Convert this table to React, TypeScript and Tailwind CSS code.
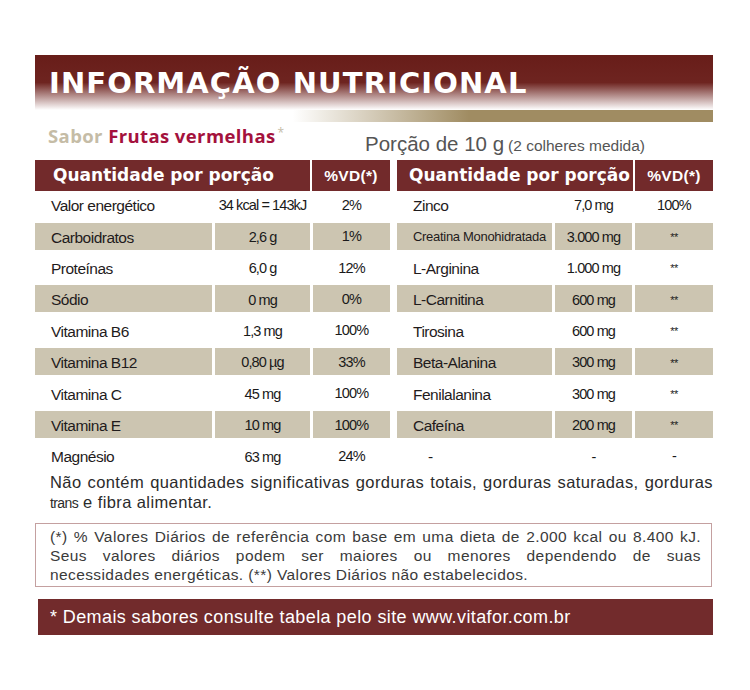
import React from 'react';

const leftRows = [
  ['Valor energético', '34 kcal = 143kJ', '2%'],
  ['Carboidratos', '2,6 g', '1%'],
  ['Proteínas', '6,0 g', '12%'],
  ['Sódio', '0 mg', '0%'],
  ['Vitamina B6', '1,3 mg', '100%'],
  ['Vitamina B12', '0,80 µg', '33%'],
  ['Vitamina C', '45 mg', '100%'],
  ['Vitamina E', '10 mg', '100%'],
  ['Magnésio', '63 mg', '24%'],
];

const rightRows = [
  ['Zinco', '7,0 mg', '100%'],
  ['Creatina Monohidratada', '3.000 mg', '**'],
  ['L-Arginina', '1.000 mg', '**'],
  ['L-Carnitina', '600 mg', '**'],
  ['Tirosina', '600 mg', '**'],
  ['Beta-Alanina', '300 mg', '**'],
  ['Fenilalanina', '300 mg', '**'],
  ['Cafeína', '200 mg', '**'],
  ['-', '-', '-'],
];

const narrow = "font-['Liberation_Sans',Arial,sans-serif]";

function NutrientTable({ rows, side }: { rows: string[][]; side: 'left' | 'right' }) {
  const cols = side === 'left' ? 'grid-cols-[177px_95px_77px]' : 'grid-cols-[155px_77px_78px]';
  return (
    <div className="flex flex-col">
      <div className={`flex h-[31px] gap-[2px] text-white ${side === 'left' ? 'w-[355px]' : 'w-[316px]'}`}>
        <div
          className={`flex flex-1 items-center bg-[#722a2b] font-['DejaVu_Sans',sans-serif] text-[17px] font-bold whitespace-nowrap ${
            side === 'left' ? 'pl-[18px]' : 'pl-[12px]'
          }`}
        >
          Quantidade por porção
        </div>
        <div
          className={`flex w-[78px] items-center justify-center bg-[#722a2b] ${narrow} text-[15.5px] font-bold tracking-[0.3px]`}
        >
          %VD(*)
        </div>
      </div>
      <div className={`grid ${cols} gap-x-[3px] gap-y-[4.4px] pt-[0.3px]`}>
        {rows.map((row, i) => {
          const shaded = i % 2 === 1;
          const bg = shaded ? 'bg-[#ccc5b1]' : '';
          const small = row[0] === 'Creatina Monohidratada';
          const dash = row[0] === '-';
          return (
            <React.Fragment key={i}>
              <div
                className={`flex h-[27px] items-center pt-[2px] ${bg} ${narrow} text-[#1f1b1c] whitespace-nowrap ${
                  small ? 'text-[13px] tracking-[-0.3px]' : 'text-[15.5px] tracking-[-0.5px]'
                } ${dash ? 'pl-[31px]' : 'pl-[16px]'}`}
              >
                {row[0]}
              </div>
              <div
                className={`flex h-[27px] items-center justify-center pt-[3px] ${bg} ${narrow} text-[14.5px] tracking-[-0.9px] text-[#1a1a1a] whitespace-nowrap`}
              >
                {row[1]}
              </div>
              <div
                className={`flex h-[27px] items-center justify-center pt-[2px] ${bg} ${narrow} ${
                  row[2] === '**' ? 'text-[11px] tracking-[-0.5px]' : 'text-[14.5px] tracking-[-0.8px]'
                } text-[#1a1a1a] whitespace-nowrap`}
              >
                {row[2]}
              </div>
            </React.Fragment>
          );
        })}
      </div>
    </div>
  );
}

export default function App() {
  return (
    <div className="min-h-[690px] w-[750px] bg-white pt-[55px]">
      <div className="ml-[35px] w-[678px]">
        {/* cabeçalho */}
        <div className="h-[55px] bg-[linear-gradient(to_bottom,#681d19_0%,#6e2420_50%,#ffffff_100%)] pl-[14px] pt-[12px]">
          <h1 className="font-['DejaVu_Sans',sans-serif] text-[29px] leading-[32px] font-bold tracking-[1.1px] text-white whitespace-nowrap">
            INFORMAÇÃO NUTRICIONAL
          </h1>
        </div>
        <div className="h-[12px] bg-[linear-gradient(to_right,rgba(160,140,98,0)_38%,#a08c62_64%,#a08c62_100%)]" />

        {/* sabor + porção */}
        <div className="flex h-[38px]">
          <div className="w-[330px] pl-[13px] pt-[4px] font-['Open_Sans',sans-serif] text-[18.5px] leading-[20px] font-bold tracking-[0.4px] whitespace-nowrap">
            <span className="text-[#c5bca6]">Sabor </span>
            <span className="text-[#a4123d]">Frutas vermelhas</span>
            <span className="relative -top-[6px] ml-[2px] text-[12px] font-normal text-[#c5bca6]">*</span>
          </div>
          <div className={`pt-[11px] ${narrow} leading-[22px] text-[#555555] whitespace-nowrap`}>
            <span className="text-[20.5px]">Porção de 10 g</span>
            <span className="ml-[4px] text-[15.5px]">(2 colheres medida)</span>
          </div>
        </div>

        {/* tabelas */}
        <div className="flex gap-[7px]">
          <NutrientTable rows={leftRows} side="left" />
          <NutrientTable rows={rightRows} side="right" />
        </div>

        {/* observação */}
        <div className={`mt-[3px] pl-[15px] ${narrow} text-[16.5px] leading-[20px] tracking-[0.4px] text-[#2b2b2b]`}>
          <div className="[text-align-last:justify] text-justify">
            Não contém quantidades significativas gorduras totais, gorduras saturadas, gorduras
          </div>
          <div>
            <span className="text-[14px] tracking-[-0.6px]">trans</span> e fibra alimentar.
          </div>
        </div>

        <div
          className={`mt-[10px] w-[677px] border border-[#c4a0a0] pt-[3px] pr-[10px] pb-[2px] pl-[14px] ${narrow} text-[15.5px] leading-[19px] tracking-[0.4px] text-[#3a3a3a]`}
        >
          <div className="[text-align-last:justify] text-justify whitespace-nowrap">
            (*) % Valores Diários de referência com base em uma dieta de 2.000 kcal ou 8.400 kJ.
          </div>
          <div className="[text-align-last:justify] text-justify">
            Seus valores diários podem ser maiores ou menores dependendo de suas
          </div>
          <div>necessidades energéticas. (**) Valores Diários não estabelecidos.</div>
        </div>

        <div
          className={`mt-[12px] ml-[3px] flex h-[36px] items-center bg-[#722b2c] pl-[12px] ${narrow} text-[18px] tracking-[0.4px] text-white`}
        >
          * Demais sabores consulte tabela pelo site www.vitafor.com.br
        </div>
      </div>
    </div>
  );
}
